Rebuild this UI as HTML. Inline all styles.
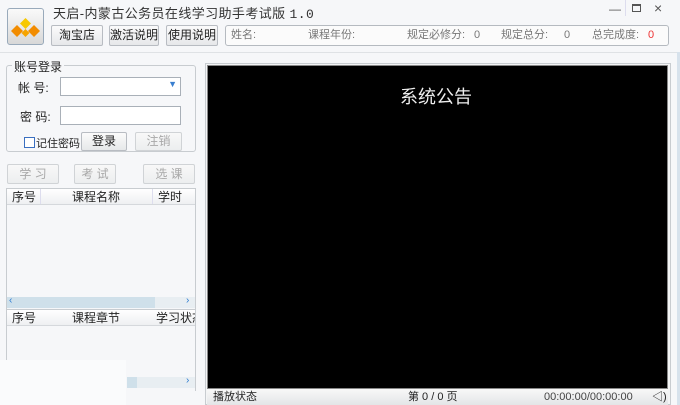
<!DOCTYPE html><html><head><meta charset="utf-8"><style>
*{margin:0;padding:0;box-sizing:border-box}
body{width:680px;height:405px;overflow:hidden;background:#f6f7f9;font-family:"Liberation Sans","Noto Sans CJK SC",sans-serif;font-size:12px;color:#222;position:relative}
.a{position:absolute}
.btn{position:absolute;border:1px solid #b8bcc2;border-radius:2px;background:linear-gradient(#fbfbfb,#e6e8ea);text-align:center;font-size:12px;line-height:19px}
.dis{color:#a8a8a8;background:linear-gradient(#f8f8f8,#eceeef);border-color:#d0d3d6}
.inp{position:absolute;background:#fff;border:1px solid #a9b0b8}
.hd{position:absolute;background:linear-gradient(#fff,#eef0f2);border-bottom:1px solid #d5d8dc;height:16px;font-size:12px;line-height:16px;overflow:hidden}
.sb{position:absolute;height:11px;background:#e8eef2}
</style></head><body>
<div class="a" style="left:7px;top:8px;width:37px;height:37px;border:1px solid #9ab;border-radius:3px;background:linear-gradient(#fafafa,#d8d8d8)">
<svg width="35" height="35" viewBox="0 0 35 35"><polygon points="17.5,9 23,14.5 17.5,20 12,14.5" fill="#f7c800"/><polygon points="9,16 15,22 9,28 3,22" fill="#f28c00"/><polygon points="26,16 32,22 26,28 20,22" fill="#f28c00"/><polygon points="17.5,20 21.5,24 17.5,28 13.5,24" fill="#f6a400"/></svg></div>
<div class="a" style="left:53px;top:3px;font-size:13px;color:#333;letter-spacing:.4px">天启-内蒙古公务员在线学习助手考试版 <span style="font-family:'Liberation Mono',monospace">1.0</span></div>
<div class="a" style="left:609px;top:2px;color:#555">—</div>
<div class="a" style="left:632px;top:4px;width:9px;height:8px;border:1px solid #555;border-top-width:2px"></div>
<div class="a" style="left:654px;top:0px;font-size:14px;color:#555">×</div>
<div class="a" style="left:625px;top:0;width:1px;height:16px;background:#dde"></div>
<div class="btn" style="left:51px;top:25px;width:52px;height:21px">淘宝店</div>
<div class="btn" style="left:109px;top:25px;width:50px;height:21px">激活说明</div>
<div class="btn" style="left:166px;top:25px;width:52px;height:21px">使用说明</div>
<div class="a" style="left:225px;top:25px;width:444px;height:21px;border:1px solid #b5bac0;border-radius:3px;background:#fbfbfb;font-size:11px;color:#777;line-height:19px">
<span class="a" style="left:5px">姓名:</span><span class="a" style="left:82px">课程年份:</span><span class="a" style="left:181px">规定必修分:</span><span class="a" style="left:248px">0</span><span class="a" style="left:275px">规定总分:</span><span class="a" style="left:338px">0</span><span class="a" style="left:366px">总完成度:</span><span class="a" style="left:422px;color:#e33">0</span></div>
<div class="a" style="left:0;top:52px;width:680px;height:1px;background:#dfe2e5"></div>
<div class="a" style="left:6px;top:65px;width:190px;height:87px;border:1px solid #c8ccd0;border-radius:3px"></div>
<div class="a" style="left:12px;top:58px;background:#f6f7f9;padding:0 2px">账号登录</div>
<div class="a" style="left:18px;top:79px">帐 号:</div>
<div class="inp" style="left:60px;top:77px;width:121px;height:19px"><span class="a" style="right:3px;top:1px;color:#3a7fd0;font-size:9px">▼</span></div>
<div class="a" style="left:20px;top:108px">密 码:</div>
<div class="inp" style="left:60px;top:106px;width:121px;height:19px"></div>
<div class="a" style="left:24px;top:137px;width:11px;height:11px;border:1px solid #3a6fc0;background:#fff"></div>
<div class="a" style="left:36px;top:135px;font-size:11px">记住密码</div>
<div class="btn" style="left:81px;top:132px;width:46px;height:19px;line-height:17px">登录</div>
<div class="btn dis" style="left:135px;top:132px;width:47px;height:19px;line-height:17px">注销</div>
<div class="btn dis" style="left:7px;top:164px;width:52px;height:20px">学 习</div>
<div class="btn dis" style="left:74px;top:164px;width:42px;height:20px">考 试</div>
<div class="btn dis" style="left:143px;top:164px;width:52px;height:20px">选 课</div>
<div class="a" style="left:6px;top:188px;width:190px;height:122px;border:1px solid #c8ccd0;background:#f6f7f9"></div>
<div class="hd" style="left:7px;top:189px;width:188px"><span class="a" style="left:5px">序号</span><span class="a" style="left:65px">课程名称</span><span class="a" style="left:151px">学时</span><span class="a" style="left:33px;top:0;width:1px;height:16px;background:#dde"></span><span class="a" style="left:145px;top:0;width:1px;height:16px;background:#dde"></span></div>
<div class="sb" style="left:7px;top:297px;width:188px"><div class="a" style="left:0;top:0;width:148px;height:11px;background:#cfe0ea"></div><span class="a" style="left:2px;top:-2px;color:#2a7ad0;font-size:10px">‹</span><span class="a" style="left:179px;top:-2px;color:#2a7ad0;font-size:10px">›</span></div>
<div class="a" style="left:6px;top:309px;width:190px;height:82px;border-left:1px solid #c8ccd0;border-right:1px solid #c8ccd0"></div>
<div class="hd" style="left:7px;top:310px;width:188px"><span class="a" style="left:5px">序号</span><span class="a" style="left:65px">课程章节</span><span class="a" style="left:149px;white-space:nowrap">学习状态</span></div>
<div class="sb" style="left:127px;top:377px;width:68px"><div class="a" style="left:0;top:0;width:10px;height:11px;background:#cfe0ea"></div><span class="a" style="left:59px;top:-2px;color:#2a7ad0;font-size:10px">›</span></div>
<div class="a" style="left:0;top:360px;width:126px;height:45px;background:#fafbfc"></div>
<div class="a" style="left:205px;top:63px;width:466px;height:342px;border:1px solid #c8ccd0;background:#f3f4f5"></div>
<div class="a" style="left:207px;top:65px;width:461px;height:324px;border:1px solid #888;background:#000"></div>
<div class="a" style="left:400px;top:83px;color:#eee;font-size:18px">系统公告</div>
<div class="a" style="left:207px;top:389px;width:461px;height:16px;background:linear-gradient(#f8f8f8,#e3e5e7);font-size:11px;line-height:16px;color:#222">
<span class="a" style="left:6px">播放状态</span><span class="a" style="left:201px">第 0 / 0 页</span><span class="a" style="left:337px;color:#444">00:00:00/00:00:00</span><span class="a" style="left:445px">◁)</span></div>
<div class="a" style="left:677px;top:52px;width:3px;height:353px;background:#d7e2ec"></div>
</body></html>
